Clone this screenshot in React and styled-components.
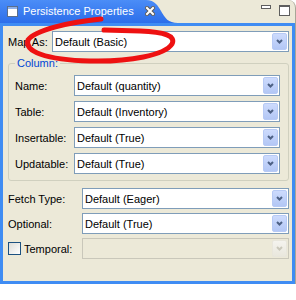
import React from 'react'
import styled, { createGlobalStyle } from 'styled-components'

const GlobalStyle = createGlobalStyle`
  html, body {
    margin: 0;
    padding: 0;
    background: #fff;
  }
  body {
    font-family: "Liberation Sans", Arial, sans-serif;
    font-size: 11px;
    color: #000;
  }
`

const View = styled.div`
  position: relative;
  width: 295px;
  border-right: 1px solid #a8a697;
  border-top-right-radius: 8px;
  background: #ece9d8;
`

const Header = styled.div`
  display: flex;
  align-items: flex-start;
  height: 23px;
`

const Tab = styled.div`
  display: flex;
  align-items: center;
  width: 178px;
  height: 23px;
  box-sizing: border-box;
  padding: 0 0 1px 7px;
  background: linear-gradient(#4b8df7, #2c6eea);
  clip-path: path('M0 0 H146 C155 0 158 6 161 11 C165 18 168 23 178 23 H0 Z');
  color: #fff;
`

const TabTitle = styled.span`
  margin-left: 5px;
  white-space: nowrap;
`

const CloseIcon = styled.svg`
  margin-left: 11px;
`

const Controls = styled.div`
  display: flex;
  align-items: flex-start;
  gap: 8px;
  margin-left: auto;
  padding: 5px 5px 0 0;
`

const Frame = styled.div`
  height: 261px;
  box-sizing: border-box;
  border: 3px solid #3f8cf3;
  padding: 5px 3px 0 5px;
  display: flex;
  flex-direction: column;
`

const Row = styled.div`
  display: grid;
  grid-template-columns: ${p => p.$label}px 1fr;
  align-items: center;
  height: 21px;
`

const Label = styled.span`
  display: flex;
  align-items: center;
  gap: 3px;
  white-space: nowrap;
`

const Combo = styled.div`
  display: flex;
  align-items: center;
  height: 21px;
  box-sizing: border-box;
  border: 1px solid ${p => (p.$disabled ? '#c9c7ba' : '#7f9db9')};
  background: ${p => (p.$disabled ? '#ece9d8' : '#fff')};
  padding: 0 1px 0 2px;
  white-space: nowrap;
  overflow: hidden;
`

const DropButton = styled.span`
  display: flex;
  align-items: center;
  justify-content: center;
  width: 15px;
  height: 17px;
  box-sizing: border-box;
  margin-left: auto;
  flex: none;
  border-radius: 2px;
  border: 1px solid ${p => (p.$disabled ? '#e8e6dc' : '#b7caf5')};
  background: ${p =>
    p.$disabled
      ? 'linear-gradient(#f4f3ee, #e9e7dd)'
      : 'linear-gradient(#cddbfd, #b3c7f5)'};
`

const Group = styled.fieldset`
  margin: 5px 0 0 0;
  border: 1px solid #d0d0bf;
  border-radius: 3px;
  padding: 5px 8px 6px 6px;
  display: flex;
  flex-direction: column;
  gap: 5px;
  min-width: 0;
`

const Legend = styled.legend`
  padding: 0 2px;
  line-height: 13px;
  color: #0046d5;
`

const Section = styled.div`
  display: flex;
  flex-direction: column;
  gap: 4px;
  margin-top: 7px;
`

const Checkbox = styled.span`
  width: 13px;
  height: 13px;
  box-sizing: border-box;
  border: 1px solid #1c5180;
  background: linear-gradient(135deg, #dcdcd7, #fff);
`

const Annotation = styled.svg`
  position: absolute;
  left: 0;
  top: 0;
  pointer-events: none;
`

const Chevron = ({ disabled }) => (
  <svg width="7" height="5" viewBox="0 0 7 5">
    <path
      d="M1 1 L3.5 3.5 L6 1"
      fill="none"
      stroke={disabled ? '#c9c7ba' : '#4d6185'}
      strokeWidth="2"
    />
  </svg>
)

const Select = ({ value, disabled }) => (
  <Combo $disabled={disabled}>
    {value}
    <DropButton $disabled={disabled}>
      <Chevron disabled={disabled} />
    </DropButton>
  </Combo>
)

const columnFields = [
  ['Name:', 'Default (quantity)'],
  ['Table:', 'Default (Inventory)'],
  ['Insertable:', 'Default (True)'],
  ['Updatable:', 'Default (True)'],
]

export default function App() {
  return (
    <>
      <GlobalStyle />
      <View>
        <Header>
          <Tab>
            <svg width="11" height="11" viewBox="0 0 11 11">
              <rect x="0.5" y="0.5" width="10" height="10" fill="#fff" stroke="#5a6e8c" />
              <rect x="1" y="1" width="9" height="2" fill="#8fb0e8" />
            </svg>
            <TabTitle>Persistence Properties</TabTitle>
            <CloseIcon width="10" height="10" viewBox="0 0 10 10">
              <path d="M2 2 L8 8 M8 2 L2 8" stroke="#5b5b5b" strokeWidth="4" strokeLinecap="square" />
              <path d="M2 2 L8 8 M8 2 L2 8" stroke="#fff" strokeWidth="2" strokeLinecap="square" />
            </CloseIcon>
          </Tab>
          <Controls>
            <svg width="10" height="4" viewBox="0 0 10 4">
              <rect x="0.5" y="0.5" width="9" height="3" fill="#fff" stroke="#5e5e5e" />
            </svg>
            <svg width="11" height="11" viewBox="0 0 11 11">
              <rect x="0.5" y="0.5" width="10" height="10" fill="#fff" stroke="#5e5e5e" />
              <rect x="0" y="0" width="11" height="2" fill="#5e5e5e" />
            </svg>
          </Controls>
        </Header>
        <Frame>
          <Row $label={44}>
            <Label>Map As:</Label>
            <Select value="Default (Basic)" />
          </Row>
          <Group>
            <Legend>Column:</Legend>
            {columnFields.map(([label, value]) => (
              <Row key={label} $label={59}>
                <Label>{label}</Label>
                <Select value={value} />
              </Row>
            ))}
          </Group>
          <Section>
            <Row $label={74}>
              <Label>Fetch Type:</Label>
              <Select value="Default (Eager)" />
            </Row>
            <Row $label={74}>
              <Label>Optional:</Label>
              <Select value="Default (True)" />
            </Row>
            <Row $label={74}>
              <Label>
                <Checkbox />
                Temporal:
              </Label>
              <Select value="" disabled />
            </Row>
          </Section>
        </Frame>
        <Annotation width="296" height="300" viewBox="0 0 296 300">
          <path
            d="M101 19 C70 22 35 30 28 40 C24 51 45 60 90 61 C130 62 165 55 172 44 C176 36 165 32 140 31 L104 30"
            fill="none"
            stroke="#ee1111"
            strokeWidth="5"
            strokeLinecap="round"
          />
        </Annotation>
      </View>
    </>
  )
}
